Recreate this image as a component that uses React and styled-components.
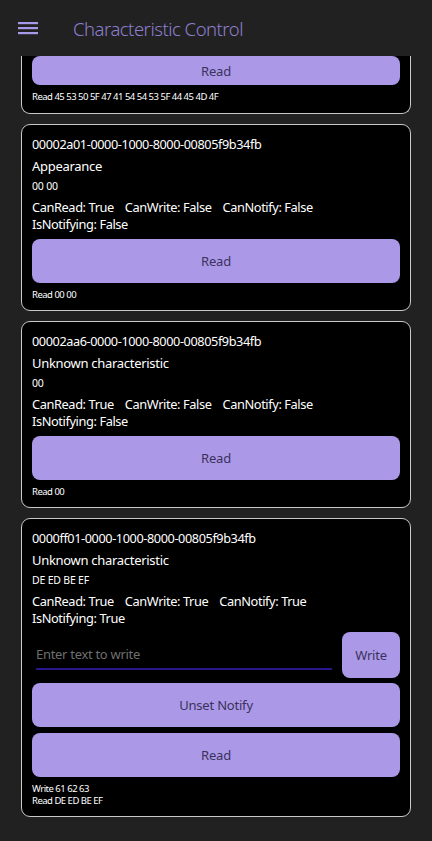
import React from "react";
import styled, { createGlobalStyle } from "styled-components";

const GlobalStyle = createGlobalStyle`
  html, body {
    margin: 0;
    padding: 0;
    background-color: #212121;
    font-family: "Noto Sans", "Open Sans", sans-serif;
  }
  * {
    box-sizing: border-box;
  }
`;

const Page = styled.div`
  width: 432px;
  height: 841px;
  overflow: hidden;
  display: flex;
  flex-direction: column;
  background-color: #212121;
`;

const Header = styled.div`
  height: 56px;
  flex-shrink: 0;
  display: flex;
  align-items: center;
  padding-left: 18px;
  background-color: #212121;
`;

const Title = styled.h1`
  margin: 0 0 0 35px;
  font-size: 18.5px;
  font-weight: 300;
  letter-spacing: -0.5px;
  color: #8d7fce;
`;

const Scroll = styled.div`
  flex: 1;
  overflow: hidden;
  display: flex;
  flex-direction: column;
  gap: 10px;
  padding: 0 21px;
`;

const Card = styled.div`
  background-color: #000;
  border: 1.5px solid #c8c8c8;
  border-radius: 9px;
  padding: 9px 10px 9px 10px;
  display: flex;
  flex-direction: column;
  flex-shrink: 0;
  ${p => p.$cut && `
    border-top: none;
    border-top-left-radius: 0;
    border-top-right-radius: 0;
    padding-top: 0;
    padding-bottom: 10px;
  `}
`;

const Uuid = styled.div`
  color: #fff;
  font-size: 12.7px;
  letter-spacing: -0.4px;
  line-height: 20px;
  margin-bottom: 2px;
`;

const Name = styled.div`
  color: #fff;
  font-size: 13px;
  letter-spacing: -0.3px;
  line-height: 20px;
  margin-bottom: 1px;
`;

const Value = styled.div`
  color: #fff;
  font-size: 10.5px;
  letter-spacing: -0.2px;
  line-height: 19px;
  margin-bottom: 3px;
`;

const Flags = styled.div`
  color: #fff;
  font-size: 12.8px;
  letter-spacing: -0.4px;
  line-height: 17px;
  span {
    margin-right: 11px;
  }
`;

const Button = styled.button`
  all: unset;
  box-sizing: border-box;
  display: flex;
  align-items: center;
  justify-content: center;
  height: ${p => p.$h || 44}px;
  width: ${p => (p.$small ? "58px" : "100%")};
  flex-shrink: 0;
  background-color: #ab99e8;
  color: #3b315c;
  font-family: "Noto Sans", sans-serif;
  font-size: 13px;
  letter-spacing: -0.2px;
  border-radius: 8px;
  margin-top: ${p => p.$mt || 0}px;
`;

const Log = styled.div`
  color: #fff;
  font-size: 9.5px;
  letter-spacing: -0.5px;
  line-height: 12px;
  margin-top: 6px;
`;

const WriteRow = styled.div`
  display: flex;
  align-items: flex-start;
  gap: 10px;
  margin-top: 5px;
`;

const Input = styled.input`
  all: unset;
  flex: 1;
  margin: 0 0 0 4px;
  padding: 8px 0 0 0;
  height: 38px;
  box-sizing: border-box;
  border-bottom: 2px solid #28178a;
  color: #fff;
  font-family: "Noto Sans", sans-serif;
  font-size: 13px;
  letter-spacing: -0.3px;
  &::placeholder {
    color: #6f6f6f;
  }
`;

const Burger = () => (
  <svg width="20" height="14" viewBox="0 0 20 14">
    <rect x="0" y="1" width="20" height="2.2" fill="#a898e8" />
    <rect x="0" y="6" width="20" height="2.2" fill="#a898e8" />
    <rect x="0" y="11" width="20" height="2.2" fill="#a898e8" />
  </svg>
);

const Characteristic = ({ uuid, name, value, flags, children, log }) => (
  <Card>
    <Uuid>{uuid}</Uuid>
    <Name>{name}</Name>
    <Value>{value}</Value>
    <Flags>
      <span>CanRead: {flags[0]}</span>
      <span>CanWrite: {flags[1]}</span>
      <span>CanNotify: {flags[2]}</span>
      <br />
      IsNotifying: {flags[3]}
    </Flags>
    {children}
    <Log>
      {log.map(l => (
        <div key={l}>{l}</div>
      ))}
    </Log>
  </Card>
);

export default function App() {
  return (
    <Page>
      <GlobalStyle />
      <Header>
        <Burger />
        <Title>Characteristic Control</Title>
      </Header>
      <Scroll>
        <Card $cut>
          <Button $h={29}>Read</Button>
          <Log>Read 45 53 50 5F 47 41 54 54 53 5F 44 45 4D 4F</Log>
        </Card>
        <Characteristic
          uuid="00002a01-0000-1000-8000-00805f9b34fb"
          name="Appearance"
          value="00 00"
          flags={["True", "False", "False", "False"]}
          log={["Read 00 00"]}
        >
          <Button $mt={6}>Read</Button>
        </Characteristic>
        <Characteristic
          uuid="00002aa6-0000-1000-8000-00805f9b34fb"
          name="Unknown characteristic"
          value="00"
          flags={["True", "False", "False", "False"]}
          log={["Read 00"]}
        >
          <Button $mt={6}>Read</Button>
        </Characteristic>
        <Characteristic
          uuid="0000ff01-0000-1000-8000-00805f9b34fb"
          name="Unknown characteristic"
          value="DE ED BE EF"
          flags={["True", "True", "True", "True"]}
          log={["Write 61 62 63", "Read DE ED BE EF"]}
        >
          <WriteRow>
            <Input placeholder="Enter text to write" />
            <Button $small $h={46}>Write</Button>
          </WriteRow>
          <Button $mt={5}>Unset Notify</Button>
          <Button $mt={6}>Read</Button>
        </Characteristic>
      </Scroll>
    </Page>
  );
}
